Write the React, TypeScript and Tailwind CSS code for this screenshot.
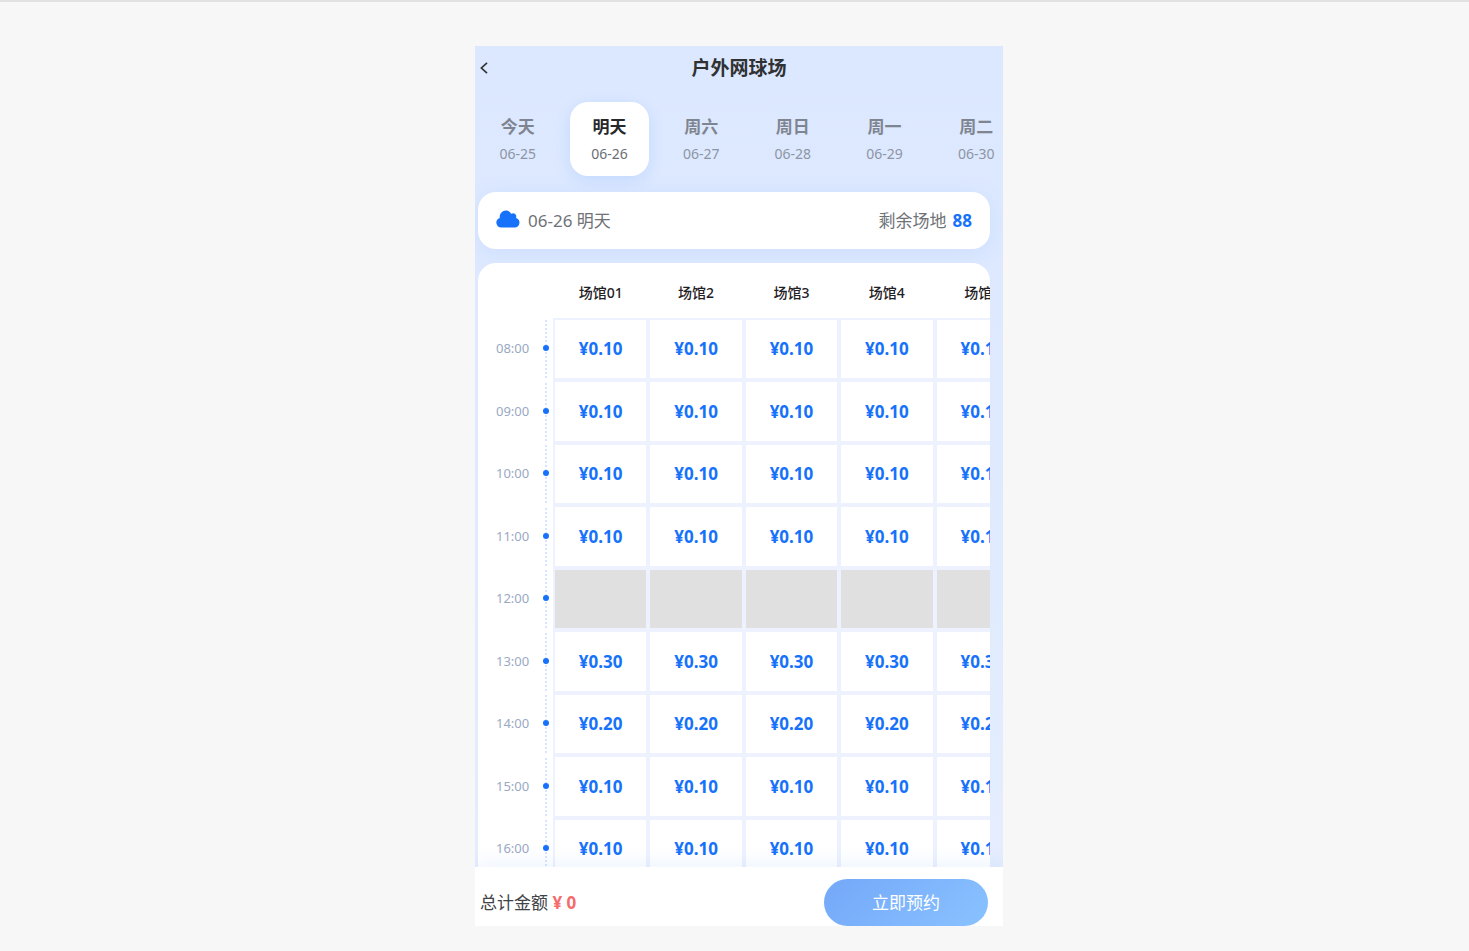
import { useState } from "react";
import { clsx } from "clsx";

interface Day {
  label: string;
  date: string;
}

const days: Day[] = [
  { label: "今天", date: "06-25" },
  { label: "明天", date: "06-26" },
  { label: "周六", date: "06-27" },
  { label: "周日", date: "06-28" },
  { label: "周一", date: "06-29" },
  { label: "周二", date: "06-30" },
];

const courts = ["场馆01", "场馆2", "场馆3", "场馆4", "场馆5"];

// price is null when the hour can't be booked
const slots: { time: string; price: string | null }[] = [
  { time: "08:00", price: "0.10" },
  { time: "09:00", price: "0.10" },
  { time: "10:00", price: "0.10" },
  { time: "11:00", price: "0.10" },
  { time: "12:00", price: null },
  { time: "13:00", price: "0.30" },
  { time: "14:00", price: "0.20" },
  { time: "15:00", price: "0.10" },
  { time: "16:00", price: "0.10" },
];

function BackIcon() {
  return (
    <svg className="h-3 w-2" fill="none" viewBox="0 0 8 12">
      <path d="M7 0.8 1.4 6 7 11.2" stroke="#333" strokeWidth="1.7" />
    </svg>
  );
}

function CloudIcon() {
  return (
    <svg className="mb-1 h-[18px] w-6 shrink-0" fill="#1672fa" viewBox="0 0 24 18">
      <path d="M5.6 17.6A5 5 0 0 1 3.7 7.9C3.4 3.8 6.2 0.5 9.9 0.5c2.2 0 4.2 1.2 5.3 3.3 1.2-0.9 2.9-0.8 4 0.2 1.1 1 1.3 2.5 0.9 3.9A5 5 0 0 1 18.8 17.6Z" />
    </svg>
  );
}

function DayTabs({ active, onChange }: { active: number; onChange: (i: number) => void }) {
  return (
    <nav className="mt-3 grid w-[538px] shrink-0 grid-cols-6 gap-3">
      {days.map((day, i) => (
        <button
          key={day.date}
          type="button"
          className={clsx(
            "flex h-[74px] flex-col items-center justify-center gap-[3px] rounded-[18px] pt-[3px]",
            i === active && "bg-white shadow-[0_4px_16px_rgba(22,114,250,0.12)]"
          )}
          onClick={() => onChange(i)}
        >
          <span
            className={clsx(
              "text-[17px] leading-6 font-bold",
              i === active ? "text-[#26282c]" : "text-[#7f8590]"
            )}
          >
            {day.label}
          </span>
          <span
            className={clsx("text-sm leading-6", i === active ? "text-[#6b6e74]" : "text-[#8d95a3]")}
          >
            {day.date}
          </span>
        </button>
      ))}
    </nav>
  );
}

function SlotTable() {
  return (
    <table className="w-[552px] table-fixed border-separate border-spacing-0">
      <thead>
        <tr className="h-[55px]">
          <td className="w-[75px]" />
          {courts.map((court) => (
            <th key={court} className="pt-1 text-sm font-medium text-[#1f2125]" scope="col">
              {court}
            </th>
          ))}
        </tr>
      </thead>
      <tbody>
        {slots.map(({ time, price }) => (
          <tr key={time} className="odd:h-[62px] even:h-[63px]">
            <th className="py-0.5 pr-1.5 font-normal" scope="row">
              <div className="relative flex h-[58px] items-center border-r-2 border-dotted border-[#d6e5ff] pl-[18px] text-[13px] text-[#9aa9c2]">
                {time}
                <span className="absolute top-[25px] -right-1 size-1.5 rounded-full bg-[#1672fa]" />
              </div>
            </th>
            {courts.map((court) => (
              <td
                key={court}
                className={clsx("border-2 border-[#edf2fe] p-0", !price && "bg-[#e0e0e0] bg-clip-padding")}
              >
                {price && (
                  <button
                    type="button"
                    className="block w-full py-4 text-center text-[17px] leading-6 font-bold text-[#1672fa]"
                  >
                    ¥{price}
                  </button>
                )}
              </td>
            ))}
          </tr>
        ))}
      </tbody>
    </table>
  );
}

export default function App() {
  const [active, setActive] = useState(1);
  const day = days[active];

  return (
    <div className="flex h-screen justify-center border-t-2 border-[#e2e2e2] bg-[#f7f7f7] pt-11 pb-[25px] pl-[9px] font-['Noto_Sans','Noto_Sans_CJK_SC',sans-serif]">
      <main className="flex w-full max-w-[528px] flex-col overflow-hidden bg-linear-to-b from-[#dce8ff] via-[#dfeaff] to-[#e6eefd]">
        <header className="grid h-11 shrink-0 grid-cols-[18px_1fr_18px] items-center">
          <button type="button" aria-label="返回" className="flex justify-center">
            <BackIcon />
          </button>
          <h1 className="text-center text-[19px] font-bold text-[#303133]">户外网球场</h1>
        </header>

        <div className="flex min-h-0 flex-1 flex-col overflow-hidden pr-[13px] pl-[3px]">
          <DayTabs active={active} onChange={setActive} />

          <section className="mt-4 flex h-[57px] shrink-0 items-center rounded-[18px] bg-white px-[18px] text-[17px] text-[#6f7276] shadow-[0_4px_24px_rgba(22,114,250,0.08)]">
            <CloudIcon />
            <span className="ml-2">
              {day.date} {day.label}
            </span>
            <span className="ml-auto">剩余场地</span>
            <strong className="ml-1.5 text-[#1672fa]">88</strong>
          </section>

          <section className="mt-3.5 min-h-0 flex-1 overflow-hidden rounded-t-[18px] bg-white">
            <SlotTable />
          </section>
        </div>

        <footer className="relative flex shrink-0 items-center justify-between bg-white pt-3 pr-[15px] pl-[5px] text-[17px] shadow-[0_-4px_20px_rgba(22,114,250,0.08)]">
          <p className="text-[#404246]">
            总计金额 <strong className="text-[#f56c6c]">¥ 0</strong>
          </p>
          <button
            type="button"
            className="h-[47px] w-[164px] rounded-full bg-linear-135 from-[#74a8f9] to-[#89c2ff] text-white"
          >
            立即预约
          </button>
        </footer>
      </main>
    </div>
  );
}
